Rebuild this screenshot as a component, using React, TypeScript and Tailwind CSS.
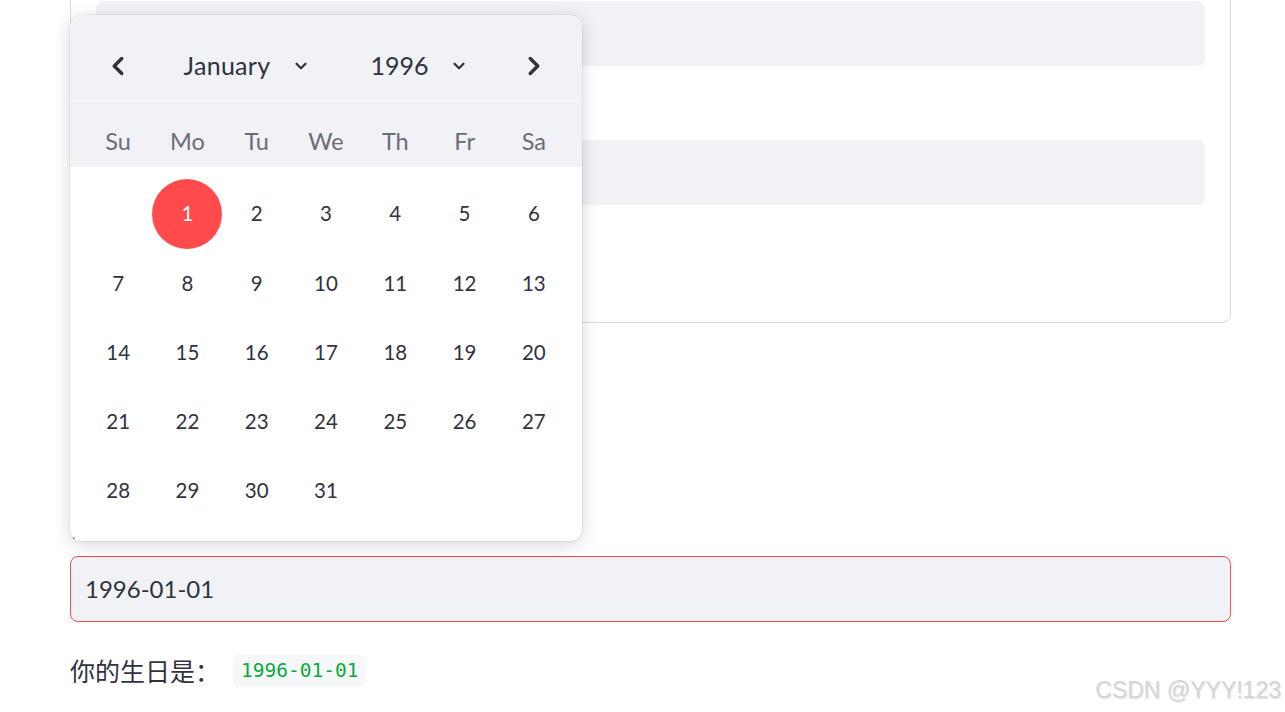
import { ChevronDown, ChevronLeft, ChevronRight } from "lucide-react";

const weekDays = ["Su", "Mo", "Tu", "We", "Th", "Fr", "Sa"];

// January 1996 starts on a Monday
const days: (number | null)[] = [null, ...Array.from({ length: 31 }, (_, i) => i + 1)];

function DatePopover() {
  return (
    <div className="absolute left-[70px] top-[15px] w-[512px] overflow-hidden rounded-[12px] bg-white shadow-[0_4px_18px_rgba(0,0,0,0.16)] ring-1 ring-black/5">
      {/* month / year header */}
      <div className="flex h-[86px] items-start border-b border-[#f6f7f9] bg-[#f0f2f6] px-[13.5px] pt-[31px]">
        <button className="flex h-[40px] w-[69px] items-center justify-center text-[#31333f]">
          <ChevronLeft size={30} strokeWidth={2.8} />
        </button>
        <div className="flex h-[40px] flex-1 items-center justify-center gap-[60px] text-[25px]">
          <div className="flex items-center gap-[22px]">
            <span className="tracking-[0.3px]">January</span>
            <ChevronDown size={18} strokeWidth={3} />
          </div>
          <div className="flex items-center gap-[22px]">
            <span>1996</span>
            <ChevronDown size={18} strokeWidth={3} />
          </div>
        </div>
        <button className="flex h-[40px] w-[69px] items-center justify-center text-[#31333f]">
          <ChevronRight size={30} strokeWidth={2.8} />
        </button>
      </div>

      {/* weekday labels */}
      <div className="grid h-[66px] grid-cols-7 bg-[#f0f2f6] px-[13.5px] pt-[26px] text-[#6b6d76]">
        {weekDays.map((d) => (
          <div key={d} className="text-center leading-[28px]">
            {d}
          </div>
        ))}
      </div>

      {/* days */}
      <div className="grid grid-cols-7 px-[13.5px] pt-[12px] pb-[16px] text-[20.5px]">
        {days.map((d, i) => (
          <div key={i} className="flex h-[69.25px] items-center justify-center">
            {d === 1 ? (
              <span className="flex h-[70px] w-[70px] shrink-0 items-center justify-center rounded-full bg-[#ff4b4b] text-white">
                {d}
              </span>
            ) : (
              <span>{d ?? ""}</span>
            )}
          </div>
        ))}
      </div>
    </div>
  );
}

export default function App() {
  return (
    <div className="relative h-[712px] w-[1285px] overflow-hidden bg-white text-[23.5px] text-[#31333f] [font-family:Lato,'Noto_Sans_CJK_SC',sans-serif]">
      <div className="pl-[70px] pr-[54px]">
        {/* form box, top scrolled out of view */}
        <div className="-mt-[26px] rounded-lg border border-[#d9dadd] px-[25px] pt-[26px] pb-[117px]">
          <div className="h-[65px] rounded-lg bg-[#f0f2f6]" />
          <div className="flex h-[74px] items-center text-[22px]">姓名</div>
          <div className="h-[65px] rounded-lg bg-[#f0f2f6]" />
        </div>

        <div className="mt-[195px] h-[38px] pt-[2px] text-[20px] leading-[20px]">请选择你的生日</div>
        <div className="flex h-[66px] items-center rounded-lg border border-[#ff4b4b] bg-[#f0f2f6] px-[14px] text-[24px]">
          1996-01-01
        </div>

        <div className="mt-[32px] flex h-[34px] items-center">
          <span className="text-[25px] [font-family:'Noto_Sans_CJK_SC',sans-serif]">你的生日是：</span>
          <code className="ml-[13px] rounded-md bg-[#f6f7f9] px-[8px] py-[3px] text-[19.5px] leading-[26px] text-[#09ab3b] [font-family:'DejaVu_Sans_Mono',monospace]">
            1996-01-01
          </code>
        </div>
      </div>

      <DatePopover />

      <div className="absolute right-[4px] top-[677px] text-[23px] leading-[26px] text-[#d6d6d6] [font-family:'Liberation_Sans',Arial,sans-serif] [text-shadow:1px_1px_1px_rgba(0,0,0,0.12)]">
        CSDN @YYY!123
      </div>
    </div>
  );
}
